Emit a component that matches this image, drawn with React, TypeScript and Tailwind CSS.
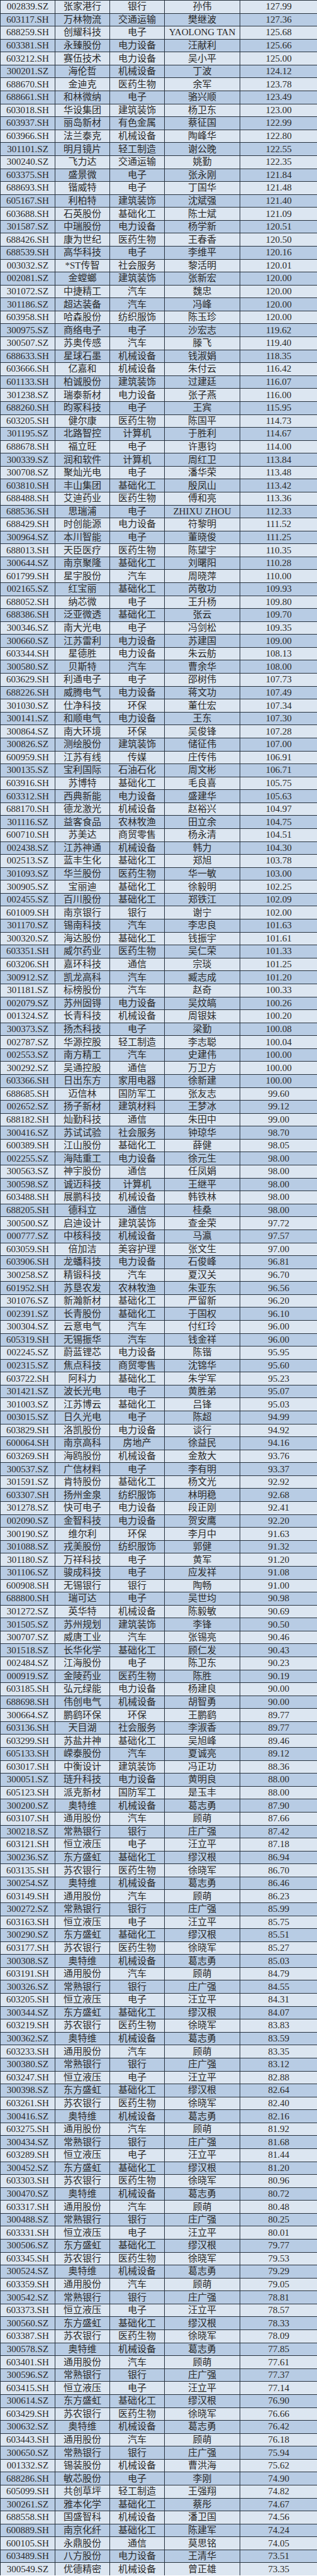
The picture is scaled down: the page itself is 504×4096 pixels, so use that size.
import React from "react";

const raw = `002839.SZ|张家港行|银行|孙伟|127.99
603117.SH|万林物流|交通运输|樊继波|127.36
688259.SH|创耀科技|电子|YAOLONG TAN|125.68
603381.SH|永臻股份|电力设备|汪献利|125.66
603212.SH|赛伍技术|电力设备|吴小平|125.00
300201.SZ|海伦哲|机械设备|丁波|124.12
688670.SH|金迪克|医药生物|余军|123.78
688661.SH|和林微纳|电子|骆兴顺|123.49
603018.SH|华设集团|建筑装饰|杨卫东|123.00
603937.SH|丽岛新材|有色金属|蔡征国|122.99
603966.SH|法兰泰克|机械设备|陶峰华|122.80
301101.SZ|明月镜片|轻工制造|谢公晚|122.55
300240.SZ|飞力达|交通运输|姚勤|122.35
603375.SH|盛景微|电子|张永刚|121.84
688693.SH|锴威特|电子|丁国华|121.48
605167.SH|利柏特|建筑装饰|沈斌强|121.40
603688.SH|石英股份|基础化工|陈士斌|121.09
301587.SZ|中瑞股份|电力设备|杨学新|120.51
688426.SH|康为世纪|医药生物|王春香|120.50
688539.SH|高华科技|电子|李维平|120.16
003032.SZ|*ST传智|社会服务|黎活明|120.01
002081.SZ|金螳螂|建筑装饰|张新宏|120.00
301072.SZ|中捷精工|汽车|魏忠|120.00
301186.SZ|超达装备|汽车|冯峰|120.00
603958.SH|哈森股份|纺织服饰|陈玉珍|120.00
300975.SZ|商络电子|电子|沙宏志|119.62
300507.SZ|苏奥传感|汽车|滕飞|119.40
688633.SH|星球石墨|机械设备|钱淑娟|118.35
603666.SH|亿嘉和|机械设备|朱付云|116.42
601133.SH|柏诚股份|建筑装饰|过建廷|116.07
301238.SZ|瑞泰新材|电力设备|张子燕|116.00
688260.SH|昀冢科技|电子|王宾|115.95
603205.SH|健尔康|医药生物|陈国平|114.73
301195.SZ|北路智控|计算机|于胜利|114.67
688678.SH|福立旺|电子|许惠钧|114.00
300339.SZ|润和软件|计算机|周红卫|113.84
300708.SZ|聚灿光电|电子|潘华荣|113.48
603810.SH|丰山集团|基础化工|殷凤山|113.42
688488.SH|艾迪药业|医药生物|傅和亮|113.36
688536.SH|思瑞浦|电子|ZHIXU ZHOU|112.33
688429.SH|时创能源|电力设备|符黎明|111.52
300964.SZ|本川智能|电子|董晓俊|111.25
688013.SH|天臣医疗|医药生物|陈望宇|110.35
300644.SZ|南京聚隆|基础化工|刘曙阳|110.28
601799.SH|星宇股份|汽车|周晓萍|110.00
002165.SZ|红宝丽|基础化工|芮敬功|109.93
688052.SH|纳芯微|电子|王升杨|109.80
688386.SH|泛亚微透|基础化工|张云|109.70
300346.SZ|南大光电|电子|冯剑松|109.35
300660.SZ|江苏雷利|电力设备|苏建国|109.00
603344.SH|星德胜|电力设备|朱云舫|108.13
300580.SZ|贝斯特|汽车|曹余华|108.00
603629.SH|利通电子|电子|邵树伟|107.73
688226.SH|威腾电气|电力设备|蒋文功|107.49
301030.SZ|仕净科技|环保|董仕宏|107.34
300141.SZ|和顺电气|电力设备|王东|107.30
300864.SZ|南大环境|环保|吴俊锋|107.28
300826.SZ|测绘股份|建筑装饰|储征伟|107.00
600959.SH|江苏有线|传媒|庄传伟|106.91
300135.SZ|宝利国际|石油石化|周文彬|106.71
603916.SH|苏博特|基础化工|毛良喜|105.75
603312.SH|西典新能|电力设备|盛建华|105.63
688170.SH|德龙激光|机械设备|赵裕兴|104.97
301116.SZ|益客食品|农林牧渔|田立余|104.75
600710.SH|苏美达|商贸零售|杨永清|104.51
002438.SZ|江苏神通|机械设备|韩力|104.30
002513.SZ|蓝丰生化|基础化工|郑旭|103.78
301093.SZ|华兰股份|医药生物|华一敏|103.00
300905.SZ|宝丽迪|基础化工|徐毅明|102.25
002455.SZ|百川股份|基础化工|郑铁江|102.09
601009.SH|南京银行|银行|谢宁|102.00
301170.SZ|锡南科技|汽车|李忠良|101.63
300320.SZ|海达股份|基础化工|钱振宇|101.61
603351.SH|威尔药业|医药生物|吴仁荣|101.33
603206.SH|嘉环科技|通信|宗琰|101.25
300912.SZ|凯龙高科|汽车|臧志成|101.20
301181.SZ|标榜股份|汽车|赵奇|100.33
002079.SZ|苏州固锝|电力设备|吴炆皜|100.26
001324.SZ|长青科技|机械设备|周银妹|100.20
300373.SZ|扬杰科技|电子|梁勤|100.08
002787.SZ|华源控股|轻工制造|李志聪|100.04
002553.SZ|南方精工|汽车|史建伟|100.00
300292.SZ|吴通控股|通信|万卫方|100.00
603366.SH|日出东方|家用电器|徐新建|100.00
688685.SH|迈信林|国防军工|张友志|99.60
002652.SZ|扬子新材|建筑材料|王梦冰|99.12
688182.SH|灿勤科技|通信|朱田中|99.00
300416.SZ|苏试试验|社会服务|钟琼华|98.70
600389.SH|江山股份|基础化工|薛健|98.05
002255.SZ|海陆重工|电力设备|徐元生|98.00
300563.SZ|神宇股份|通信|任凤娟|98.00
300598.SZ|诚迈科技|计算机|王继平|98.00
603488.SH|展鹏科技|机械设备|韩铁林|98.00
688205.SH|德科立|通信|桂桑|98.00
300500.SZ|启迪设计|建筑装饰|查金荣|97.72
000777.SZ|中核科技|机械设备|马瀛|97.57
603059.SH|倍加洁|美容护理|张文生|97.00
603906.SH|龙蟠科技|电力设备|石俊峰|96.81
300258.SZ|精锻科技|汽车|夏汉关|96.70
601952.SH|苏垦农发|农林牧渔|朱亚东|96.56
301076.SZ|新瀚新材|基础化工|严留新|96.20
002391.SZ|长青股份|基础化工|于国权|96.10
300304.SZ|云意电气|汽车|付红玲|96.00
605319.SH|无锡振华|汽车|钱金祥|96.00
002245.SZ|蔚蓝锂芯|电力设备|陈锴|95.95
002315.SZ|焦点科技|商贸零售|沈锦华|95.60
603722.SH|阿科力|基础化工|朱学军|95.23
301421.SZ|波长光电|电子|黄胜弟|95.07
301003.SZ|江苏博云|基础化工|吕锋|95.03
003015.SZ|日久光电|电子|陈超|94.99
603829.SH|洛凯股份|电力设备|谈行|94.92
600064.SH|南京高科|房地产|徐益民|94.16
603269.SH|海鸥股份|机械设备|金敖大|93.76
300537.SZ|广信材料|电子|李有明|93.37
301591.SZ|肯特股份|基础化工|杨文光|92.92
603307.SH|扬州金泉|纺织服饰|林明稳|92.68
301278.SZ|快可电子|电力设备|段正刚|92.41
002090.SZ|金智科技|电力设备|贺安鹰|92.20
300190.SZ|维尔利|环保|李月中|91.63
301088.SZ|戎美股份|纺织服饰|郭健|91.32
301180.SZ|万祥科技|电子|黄军|91.20
301106.SZ|骏成科技|电子|应发祥|91.08
600908.SH|无锡银行|银行|陶畅|91.00
688800.SH|瑞可达|电子|吴世均|90.98
301272.SZ|英华特|机械设备|陈毅敏|90.69
301505.SZ|苏州规划|建筑装饰|李锋|90.50
300707.SZ|威唐工业|汽车|张锡亮|90.46
301518.SZ|长华化学|基础化工|顾仁发|90.43
002484.SZ|江海股份|电子|陈卫东|90.23
000919.SZ|金陵药业|医药生物|陈胜|90.19
603185.SH|弘元绿能|电力设备|杨建良|90.00
688698.SH|伟创电气|机械设备|胡智勇|90.00
300664.SZ|鹏鹞环保|环保|王鹏鹞|89.77
603136.SH|天目湖|社会服务|李淑香|89.77
603299.SH|苏盐井神|基础化工|吴旭峰|89.46
605133.SH|嵘泰股份|汽车|夏诚亮|89.12
603017.SH|中衡设计|建筑装饰|冯正功|88.36
300051.SZ|琏升科技|电力设备|黄明良|88.00
605123.SH|派克新材|国防军工|是玉丰|88.00`;

const tail = `001332.SZ|锡装股份|机械设备|曹洪海|75.62
688286.SH|敏芯股份|电子|李刚|74.90
605099.SH|共创草坪|轻工制造|王强翔|74.82
300261.SZ|雅本化学|基础化工|蔡彤|74.67
688558.SH|国盛智科|机械设备|潘卫国|74.56
600889.SH|南京化纤|基础化工|陈建军|74.24
600105.SH|永鼎股份|通信|莫思铭|74.05
603489.SH|八方股份|电力设备|王清华|73.51
300549.SZ|优德精密|机械设备|曾正雄|73.35`;

const head = raw.split("\n").map((l) => l.split("|"));
const end = tail.split("\n").map((l) => l.split("|"));
const names = ["奥特维", "通用股份", "常熟银行", "恒立液压", "东方盛虹", "苏农银行"];
const inds = ["机械设备", "汽车", "银行", "电子", "基础化工", "医药生物"];
const ppl = ["葛志勇", "顾萌", "庄广强", "汪立平", "缪汉根", "徐晓军"];
const filler: string[][] = [];
const n = 199 - head.length - end.length;
for (let i = 0; i < n; i++) {
  const v = (87.9 - (i * 12.2) / n).toFixed(2);
  const k = i % 6;
  filler.push([i % 2 ? "603" + (100 + i * 7) + ".SH" : "300" + (200 + i * 9) + ".SZ", names[k], inds[k], ppl[k], v]);
}
const rows = [...head, ...filler, ...end];

export default function App() {
  return (
    <div
      className="w-[504px] bg-[#dce6f1] text-[#2a2a2a]"
      style={{ fontFamily: '"Liberation Serif", "Noto Sans CJK SC", serif' }}
    >
      {rows.map((r, i) => (
        <div
          key={i}
          className={`grid h-[20.58px] grid-cols-[88px_87px_87px_120px_122px] border-t border-[#26313d] text-[15px] leading-none ${
            i % 2 === 1 ? "bg-[#b8cce4]" : "bg-[#dce6f1]"
          }`}
        >
          <div className="flex items-center justify-center border-x border-[#26313d]">{r[0]}</div>
          <div className="flex items-center justify-center border-r border-[#26313d]">{r[1]}</div>
          <div className="flex items-center justify-center border-r border-[#26313d]">{r[2]}</div>
          <div className="flex items-center justify-center border-r border-[#26313d]">{r[3]}</div>
          <div className="flex items-center justify-center">{r[4]}</div>
        </div>
      ))}
    </div>
  );
}
